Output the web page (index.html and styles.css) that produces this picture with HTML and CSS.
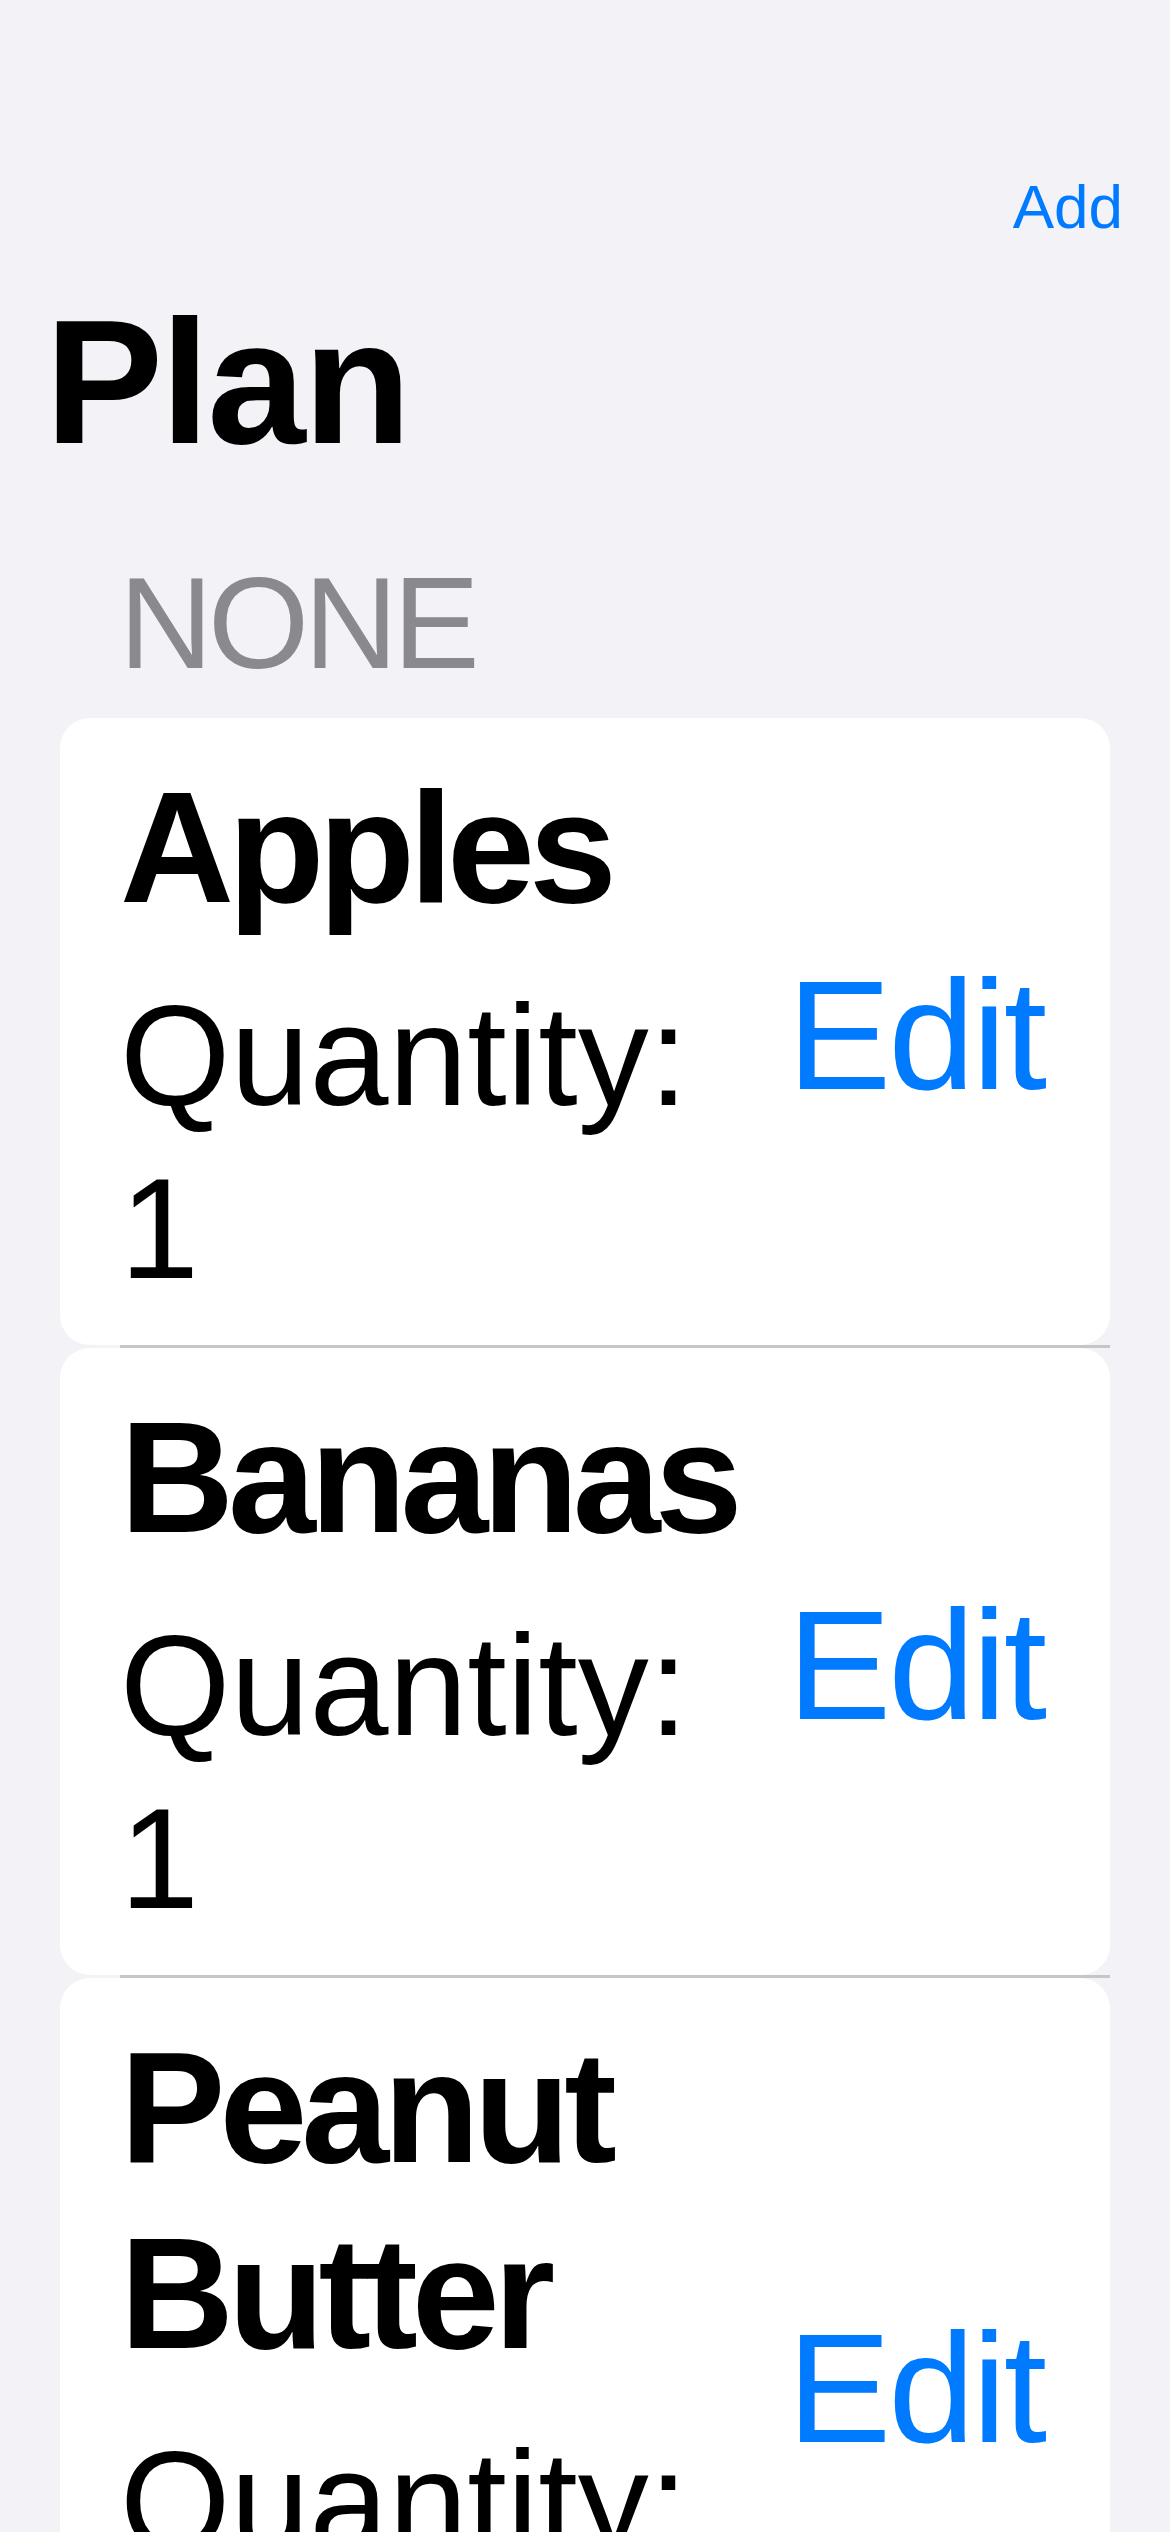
FILE: index.html
```html
<!DOCTYPE html>
<html lang="en">
<head>
<meta charset="utf-8">
<title>Plan</title>
<link rel="stylesheet" href="styles.css">
</head>
<body>
<div class="screen">
  <header class="nav">
    <div class="nav-bar"><button class="nav-add" type="button">Add</button></div>
    <h1 class="large-title">Plan</h1>
  </header>
  <section class="list-section">
    <h2 class="section-header">NONE</h2>
    <ul class="rows">
      <li class="row">
        <div class="row-text">
          <div class="item-name">Apples</div>
          <div class="item-qty">Quantity: 1</div>
        </div>
        <button class="edit" type="button">Edit</button>
      </li>
      <li class="row">
        <div class="row-text">
          <div class="item-name">Bananas</div>
          <div class="item-qty">Quantity: 1</div>
        </div>
        <button class="edit" type="button">Edit</button>
      </li>
      <li class="row">
        <div class="row-text">
          <div class="item-name">Peanut Butter</div>
          <div class="item-qty">Quantity: 1</div>
        </div>
        <button class="edit" type="button">Edit</button>
      </li>
    </ul>
  </section>
</div>
</body>
</html>
```
FILE: styles.css
```css
* { box-sizing: border-box; }

html, body {
  margin: 0;
  padding: 0;
  background: #F2F2F7;
}

body {
  width: 1170px;
  height: 2532px;
  overflow: hidden;
  font-family: "Liberation Sans", Arial, sans-serif;
  color: #000;
}

.screen {
  padding-top: 170px;
}

.nav-bar {
  display: flex;
  justify-content: flex-end;
  padding-right: 47px;
}

.nav-add {
  border: 0;
  background: none;
  padding: 0;
  margin: 0;
  font-family: inherit;
  font-size: 62px;
  line-height: 74px;
  color: #007AFF;
}

.large-title {
  margin: 33px 0 0 0;
  padding-left: 45px;
  font-size: 177px;
  line-height: 210px;
  font-weight: 700;
  letter-spacing: -2.5px;
}

.list-section {
  padding: 0 60px;
}

.section-header {
  margin: 58px 0 17px 0;
  padding-left: 59px;
  font-size: 130px;
  line-height: 156px;
  font-weight: 400;
  letter-spacing: -5px;
  color: #8A898E;
}

.rows {
  list-style: none;
  margin: 0;
  padding: 0;
}

.row {
  position: relative;
  display: flex;
  align-items: center;
  gap: 40px;
  background: #fff;
  border-radius: 30px;
  padding: 36px 66px 30px 60px;
  margin-bottom: 3px;
}

.row::after {
  content: "";
  position: absolute;
  left: 60px;
  right: 0;
  bottom: -3px;
  height: 3px;
  background: #C6C6C8;
}

.row-text {
  flex: 1;
  min-width: 0;
  display: flex;
  flex-direction: column;
  gap: 29px;
}

.item-name {
  font-size: 158px;
  line-height: 186px;
  font-weight: 700;
  letter-spacing: -6px;
}

.item-qty {
  font-size: 142px;
  line-height: 173px;
  letter-spacing: 0;
}

.edit {
  flex: none;
  border: 0;
  background: none;
  padding: 0;
  margin: 0;
  font-family: inherit;
  font-size: 156px;
  line-height: 186px;
  letter-spacing: -3px;
  color: #007AFF;
}
```
